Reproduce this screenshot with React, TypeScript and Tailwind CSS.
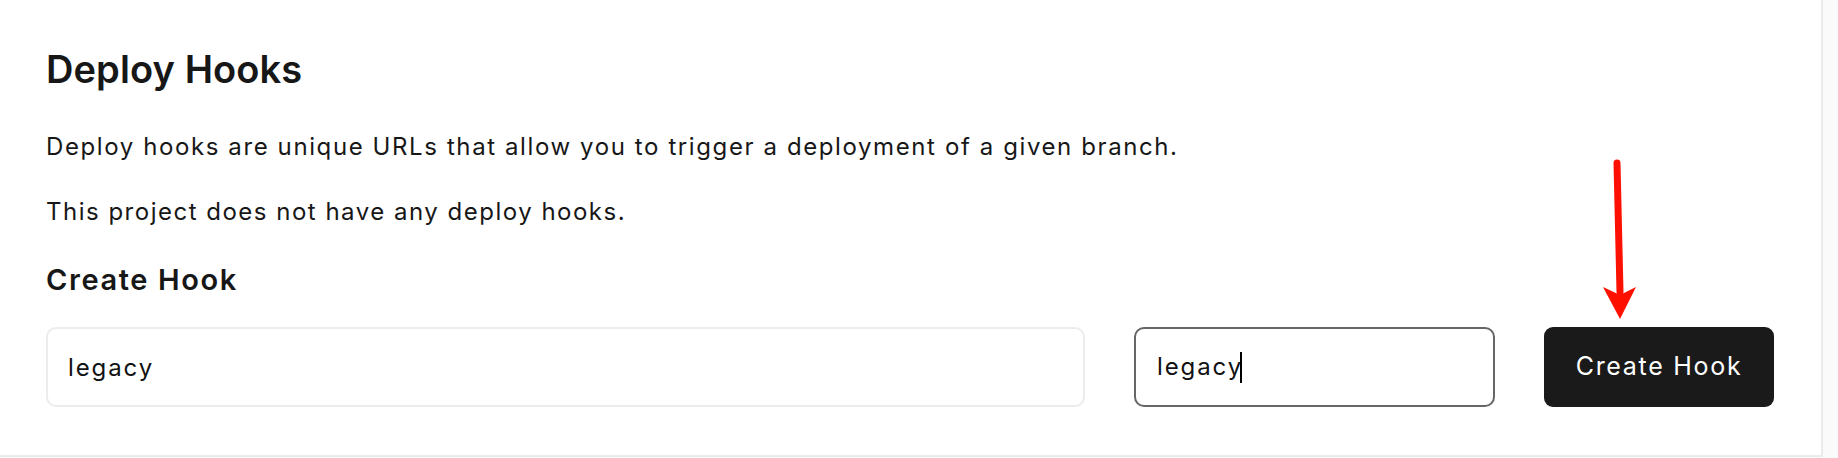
export default function App() {
    return (
        <div className="min-h-screen bg-[#fafafa]" style={{ fontFamily: "Inter, 'Noto Sans', sans-serif" }}>
            <div className="relative w-[1823px] bg-white border-r-2 border-b-2 border-[#ebebeb] pt-[46px] pl-[46px] pr-[47px] pb-[48px] text-[#171717]">
                <h2 className="text-[38px] leading-[46px] font-semibold tracking-[0.1px]">Deploy Hooks</h2>
                <p className="mt-[37px] text-[24px] leading-[36px] tracking-[1.6px]">Deploy hooks are unique URLs that allow you to trigger a deployment of a given branch.</p>
                <p className="mt-[29px] text-[24px] leading-[36px] tracking-[1.5px]">This project does not have any deploy hooks.</p>
                <h3 className="mt-[32px] text-[29px] leading-[36px] font-semibold tracking-[1.6px]">Create Hook</h3>

                <div className="mt-[29px] flex items-center gap-[49px]">
                    <input
                        className="flex-1 h-[80px] rounded-[10px] border-2 border-[#ececec] pl-[20px] text-[24px] tracking-[1.9px] text-[#111] outline-none"
                        defaultValue="legacy"
                        readOnly
                    />
                    <div className="w-[361px] h-[80px] rounded-[10px] border-2 border-[#666] pl-[21px] flex items-center text-[24px] tracking-[1.9px] text-[#111]">
                        <span>legacy</span>
                        <span className="inline-block w-[2px] h-[31px] -ml-[3px] bg-black"></span>
                    </div>
                    <button className="w-[230px] h-[80px] rounded-[9px] bg-[#1a1a1a] text-white text-[25px] tracking-[1.7px]">Create Hook</button>
                </div>

                {/* red annotation arrow */}
                <svg className="absolute left-0 top-0 pointer-events-none" width="1823" height="458">
                    <line x1="1617" y1="163" x2="1620" y2="292" stroke="#fe1000" strokeWidth="7" strokeLinecap="round" />
                    <polygon points="1620,319 1603,287 1620,295 1636,287" fill="#fe1000" />
                </svg>
            </div>
        </div>
    )
}
